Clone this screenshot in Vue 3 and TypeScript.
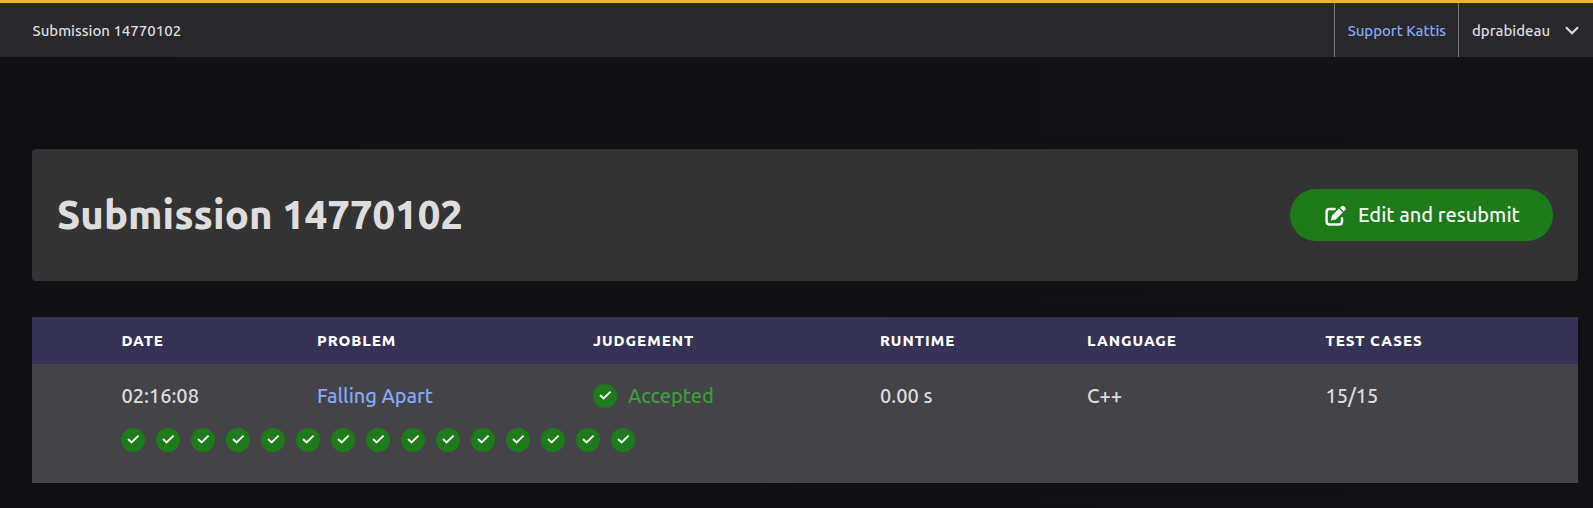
<script setup lang="ts">
interface Column {
  key: string
  label: string
}

const columns: Column[] = [
  { key: 'date', label: 'DATE' },
  { key: 'problem', label: 'PROBLEM' },
  { key: 'judgement', label: 'JUDGEMENT' },
  { key: 'runtime', label: 'RUNTIME' },
  { key: 'language', label: 'LANGUAGE' },
  { key: 'cases', label: 'TEST CASES' },
]
const testCases = 15
</script>

<template>
  <div class="page">
    <header class="topbar">
      <span class="crumb">Submission 14770102</span>
      <nav class="menu">
        <a class="support">Support Kattis</a>
        <div class="user">
          <span>dprabideau</span>
          <svg class="chevron" viewBox="0 0 14 9"><path d="M1 1.2 L7 7.2 L13 1.2" /></svg>
        </div>
      </nav>
    </header>
    <section class="card">
      <h1>Submission 14770102</h1>
      <button class="edit">
        <svg class="pen" viewBox="0 0 21 21">
          <path class="frame" d="M9.5 3.9 H4.6 Q1.6 3.9 1.6 6.9 V16.4 Q1.6 19.4 4.6 19.4 H14 Q17 19.4 17 16.4 V13.2" />
          <path class="tip" d="M5.8 15.6 L7 10.6 L14 3.6 L17.8 7.4 L10.8 14.4 Z" />
          <path class="tip" d="M14.9 2.8 L16.3 1.4 Q17.9 0 19.4 1.5 L20.1 2.2 Q21.4 3.7 20.1 5.1 L18.6 6.5 Z" />
        </svg>
        <span class="edit-label">Edit and resubmit</span>
      </button>
    </section>
    <section class="table">
      <div class="row head">
        <div v-for="c in columns" :key="c.key">{{ c.label }}</div>
      </div>
      <div class="results">
        <div class="row cells">
          <div>02:16:08</div>
          <div class="link">Falling Apart</div>
          <div class="verdict">
            <span class="badge"><svg viewBox="0 0 24 24"><path d="M7 11 L10.6 14.4 L17.6 7.6" /></svg></span>
            <span class="verdict-label">Accepted</span>
          </div>
          <div>0.00 s</div>
          <div>C++</div>
          <div>15/15</div>
        </div>
        <div class="badges">
          <span v-for="n in testCases" :key="n" class="badge"><svg viewBox="0 0 24 24"><path d="M7 11 L10.6 14.4 L17.6 7.6" /></svg></span>
        </div>
      </div>
    </section>
  </div>
</template>

<style>
body { background: #121214; }
</style>

<style scoped>
.page { height: 508px; overflow: hidden; box-sizing: border-box; background: linear-gradient(to right, #111014, #121214 50%, #131315); color: #ddd; font-family: Ubuntu, "Noto Sans", sans-serif; font-weight: 480; }
.topbar { display: flex; justify-content: space-between; height: 57px; box-sizing: border-box; border-top: 3px solid #f0b034; background: #29282d; padding-left: 32.5px; font-size: 15px; line-height: 55px; }
.menu { display: flex; }
.support { width: 124px; box-sizing: border-box; border-left: 1px solid #7b7b7e; padding-left: 12.7px; color: #85a9f5; letter-spacing: -0.06px; }
.user { width: 135px; box-sizing: border-box; border-left: 1px solid #7b7b7e; padding: 0 14px 0 13px; display: flex; align-items: center; justify-content: space-between; }
.support, .user { height: 54px; }
.chevron { width: 14px; height: 9px; fill: none; stroke: #ddd; stroke-width: 2.2; }
.card { margin: 92px 15px 0 32px; height: 132px; box-sizing: border-box; border-radius: 4px; background: #333; padding: 0 25px; display: flex; align-items: center; justify-content: space-between; box-shadow: 0 0 8px rgba(0, 0, 0, 0.15); }
h1 { margin: 0; font-size: 40px; line-height: 52px; font-weight: 800; letter-spacing: 0.03px; }
.edit { width: 263px; height: 52px; border: 0; border-radius: 26px; padding: 0 0 0 35px; background: #1d7b19; color: #f5f5f5; font: 480 20px/51px Ubuntu, "Noto Sans", sans-serif; display: flex; align-items: center; }
.edit-label { padding-bottom: 2px; }
.pen { width: 21px; height: 21px; margin-right: 12px; }
.frame { fill: none; stroke: #f5f5f5; stroke-width: 2.5; stroke-linecap: round; }
.tip { fill: #f5f5f5; }
.table { margin: 36px 15px 0 32px; box-shadow: 0 0 8px rgba(0, 0, 0, 0.15); }
.row { display: grid; grid-template-columns: 195.6px 276px 287px 207px 238.5px 1fr; padding-left: 89.4px; }
.head { height: 47px; line-height: 48px; background: #353256; color: #fff; font-size: 15px; font-weight: 800; letter-spacing: 1px; }
.results { height: 119px; box-sizing: border-box; padding-top: 16px; background: #444347; }
.cells { height: 32px; line-height: 31px; font-size: 20px; }
.link { color: #85a9f5; letter-spacing: -0.06px; }
.verdict { display: flex; align-items: center; gap: 11px; color: #3d9d3c; letter-spacing: -0.06px; }
.verdict-label { padding-bottom: 1px; }
.badge { width: 24px; height: 24px; flex: none; border-radius: 50%; background: #1d7b19; }
.badge svg { display: block; fill: none; stroke: #f8f8f8; stroke-width: 2; }
.badges { display: flex; gap: 11px; padding: 16px 0 0 89px; }
</style>
